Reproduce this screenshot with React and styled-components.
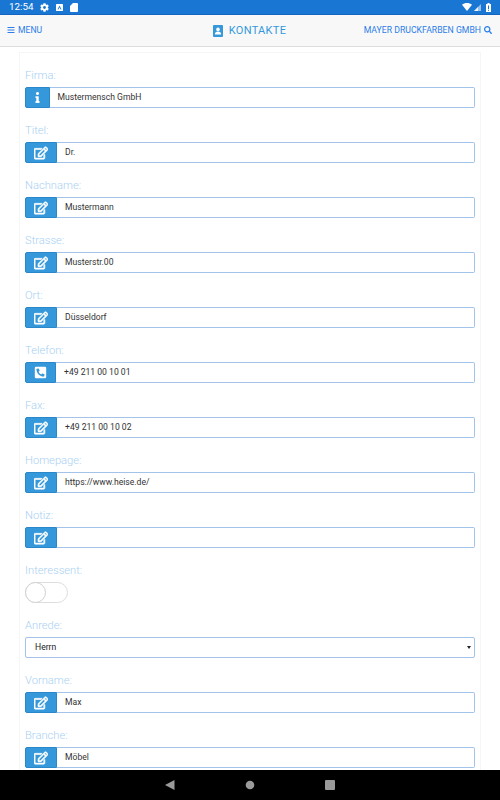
import React from "react";
import styled, { createGlobalStyle } from "styled-components";
import { FaInfo, FaBars, FaSearch, FaRegEdit, FaPhoneSquareAlt, FaCog } from "react-icons/fa";

const Global = createGlobalStyle`
  html, body { margin: 0; padding: 0; background: #fff; }
  body { font-family: Roboto, "Liberation Sans", sans-serif; overflow: hidden; }
  * { box-sizing: border-box; }
`;

const Screen = styled.div`
  width: 500px; height: 800px; display: flex; flex-direction: column; overflow: hidden; background: #fff;
`;
const StatusBar = styled.div`
  height: 15px; flex: none; background: #1976d2; border-bottom: 1px solid #1565c0;
  display: flex; align-items: center; justify-content: space-between; padding: 0 9px 0 9px; color: #fff;
`;
const StatusLeft = styled.div`display: flex; align-items: center; gap: 7px;`;
const StatusRight = styled.div`display: flex; align-items: center; gap: 2px;`;
const Clock = styled.span`font-size: 9.8px; line-height: 14px;`;
const Header = styled.header`
  height: 32px; flex: none; background: #f8f8f8; border-bottom: 1px solid #ddd;
  display: grid; grid-template-columns: 1fr auto 1fr; align-items: center; padding: 0 8px 0 7px; color: #2b7de9;
`;
const Menu = styled.div`display: flex; align-items: center; gap: 3px; font-size: 8.6px; padding-bottom: 1px;`;
const Title = styled.div`display: flex; align-items: center; gap: 6px; font-size: 11px; letter-spacing: 0.3px; color: #3498db; font-weight: 400;`;
const Company = styled.div`display: flex; align-items: center; justify-content: flex-end; gap: 3px; font-size: 8.7px; white-space: nowrap; padding-bottom: 1px;`;
const Card = styled.main`
  flex: 1; min-height: 0; overflow: hidden; margin: 5px 19px 0 19px; padding: 14px 5px 0;
  border: 1px solid #f6f6f6; border-bottom: 0;
`;
const Field = styled.div`height: 55px; display: flex; flex-direction: column;`;
const Label = styled.label`
  font-size: 11.2px; font-weight: 300; line-height: 17px; height: 16px; margin-bottom: 4px; color: #a9d0f3;
`;
const InputRow = styled.div`display: flex; height: 21px;`;
const Addon = styled.div`
  flex: none; width: ${p => p.$w}px; background: #3498db; border: 1px solid #2a88ca; border-radius: 2px 0 0 2px;
  display: flex; align-items: center; justify-content: center; color: #fff;
`;
const Value = styled.div`
  flex: 1; border: 1px solid #a3c3e8; border-left: 0; border-radius: 0 2px 2px 0; background: #fff;
  font-size: 8.6px; color: #333; display: flex; align-items: center; padding: 0 0 1px 8px;
`;
const Toggle = styled.div`
  width: 43px; height: 21px; border: 1px solid #ddd; border-radius: 11px; position: relative; background: #fff;
`;
const Knob = styled.div`
  position: absolute; left: -1px; top: -1px; width: 21px; height: 21px; border-radius: 50%; border: 1px solid #d0d0d0; background: #fff;
`;
const Select = styled.div`
  height: 21px; border: 1px solid #a3c3e8; border-radius: 2px; display: flex; align-items: center; justify-content: space-between;
  font-size: 8.6px; color: #222; padding: 0 3px 1px 9px;
`;
const Caret = styled.span`
  width: 0; height: 0; border-left: 2px solid transparent; border-right: 2px solid transparent; border-top: 3px solid #222;
`;
const NavBar = styled.nav`
  height: 30px; flex: none; background: #000; display: grid; grid-template-columns: 10px 10px 10px; justify-content: center;
  column-gap: 70px; align-items: center; justify-items: center;
`;

const Doc = () => (
  <svg width="7" height="7" viewBox="0 0 7 7"><rect width="7" height="7" rx=".5" fill="#fff" /><path d="M3.500 1.500 5.500 5.500H4.600L3.500 3.300 2.400 5.500H1.500z" fill="#1976d2" /></svg>
);
const Sd = () => (
  <svg width="8" height="9" viewBox="0 0 8 9"><path d="M3 0h4a1 1 0 0 1 1 1v7a1 1 0 0 1-1 1H1a1 1 0 0 1-1-1V3z" fill="#fff" /></svg>
);
const Wifi = () => (
  <svg width="10" height="8" viewBox="0 0 10 8"><path d="M0 1.800C2.700-.6 7.300-.6 10 1.800L5 8z" fill="#fff" /></svg>
);
const Signal = () => (
  <svg width="7" height="7" viewBox="0 0 7 7"><path d="M7 0v7H0z" fill="#fff" opacity=".55" /><path d="M4 3v4H0z" fill="#fff" opacity=".8" /></svg>
);
const Battery = () => (
  <svg width="5" height="9" viewBox="0 0 5 9" style={{ marginLeft: 3 }}><path d="M1.500 0h2v1H5v8H0V1h1.500z" fill="#fff" /><path d="M2 2.500h1v3.500H2zM2 6.800h1v1H2z" fill="#1976d2" /></svg>
);
const ContactIcon = () => (
  <svg width="10" height="12" viewBox="0 0 10 12">
    <rect width="10" height="12" rx="1" fill="#3498db" />
    <circle cx="5" cy="4.400" r="1.800" fill="#fff" />
    <path d="M1.800 9.600c0-2 1.300-3 3.200-3s3.200 1 3.200 3z" fill="#fff" />
  </svg>
);

const fields = [
  ["Firma:", "Mustermensch GmbH", "info"],
  ["Titel:", "Dr."],
  ["Nachname:", "Mustermann"],
  ["Strasse:", "Musterstr.00"],
  ["Ort:", "Düsseldorf"],
  ["Telefon:", "+49 211 00 10 01", "phone"],
  ["Fax:", "+49 211 00 10 02"],
  ["Homepage:", "https://www.heise.de/"],
  ["Notiz:", ""],
];

const addonWidth = { info: 24.5, phone: 31 };
const addonIcon = k => k === "info" ? <FaInfo size={11} /> : k === "phone" ? <FaPhoneSquareAlt size={13} /> : <FaRegEdit size={14} strokeWidth={24} />;

const TextField = ({ label, value, kind }) => (
  <Field>
    <Label>{label}</Label>
    <InputRow>
      <Addon $w={addonWidth[kind] || 32}>{addonIcon(kind)}</Addon>
      <Value>{value}</Value>
    </InputRow>
  </Field>
);

export default function App() {
  return (
    <Screen>
      <Global />
      <StatusBar>
        <StatusLeft>
          <Clock>12:54</Clock>
          <FaCog size={9} />
          <Doc />
          <Sd />
        </StatusLeft>
        <StatusRight>
          <Wifi />
          <Signal />
          <Battery />
        </StatusRight>
      </StatusBar>
      <Header>
        <Menu><FaBars size={8} /> MENU</Menu>
        <Title><ContactIcon /> KONTAKTE</Title>
        <Company>MAYER DRUCKFARBEN GMBH <FaSearch size={8} /></Company>
      </Header>
      <Card>
        {fields.map(([l, v, k]) => <TextField key={l} label={l} value={v} kind={k} />)}
        <Field>
          <Label>Interessent:</Label>
          <Toggle><Knob /></Toggle>
        </Field>
        <Field>
          <Label>Anrede:</Label>
          <Select>Herrn<Caret /></Select>
        </Field>
        <TextField label="Vorname:" value="Max" />
        <TextField label="Branche:" value="Möbel" />
      </Card>
      <NavBar>
        <svg width="10" height="10" viewBox="0 0 10 10"><path d="M9.500 0v10L0 5z" fill="#9a9a9a" /></svg>
        <svg width="10" height="10" viewBox="0 0 10 10"><circle cx="5" cy="5" r="4.300" fill="#9a9a9a" /></svg>
        <svg width="10" height="10" viewBox="0 0 10 10"><rect width="10" height="10" rx="1" fill="#9a9a9a" /></svg>
      </NavBar>
    </Screen>
  );
}
